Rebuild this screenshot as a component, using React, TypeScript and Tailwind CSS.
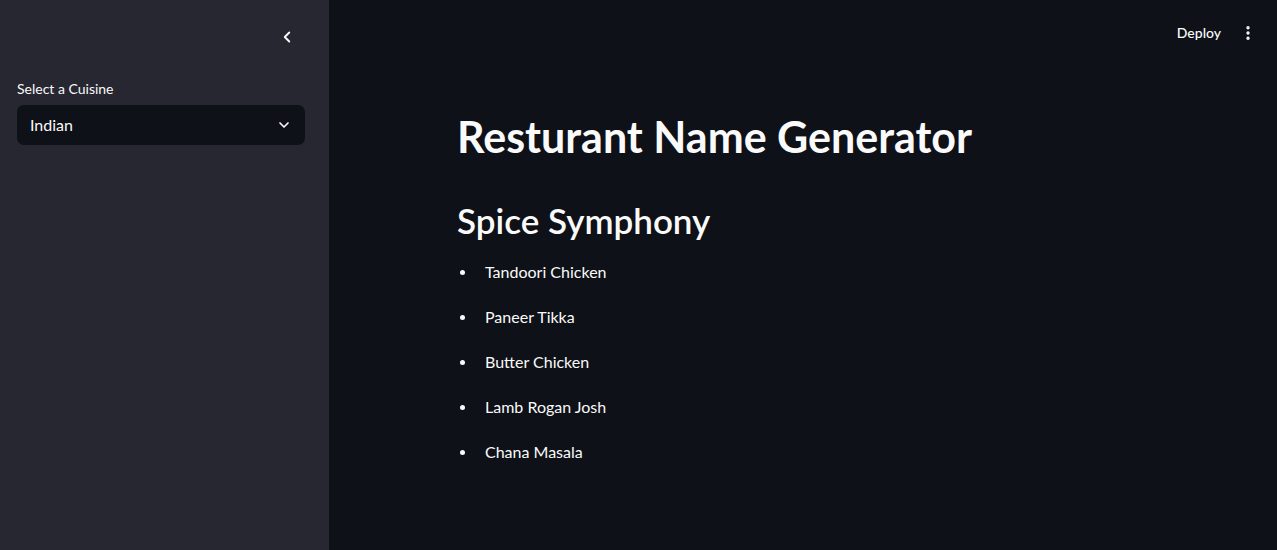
import { ChevronLeft, ChevronDown, EllipsisVertical } from 'lucide-react';

const dishes = ['Tandoori Chicken', 'Paneer Tikka', 'Butter Chicken', 'Lamb Rogan Josh', 'Chana Masala'];

function Sidebar() {
  return (
    <aside className="w-[329px] shrink-0 bg-[#262730] pl-[17px] pr-[24px]">
      <div className="flex h-[79px] items-start justify-end pr-[9px] pt-[28px]">
        <ChevronLeft className="h-[18px] w-[18px] text-[#fafafa]" strokeWidth={2.5} />
      </div>
      <label className="block text-[14px] leading-[20px] text-[#fafafa]">Select a Cuisine</label>
      <div className="mt-[6px] flex h-[40px] items-center justify-between rounded-[7px] bg-[#0e1117] pl-[13px] pr-[13px]">
        <span className="text-[16px] text-[#fafafa]">Indian</span>
        <ChevronDown className="h-[16px] w-[16px] text-[#fafafa]" strokeWidth={2.5} />
      </div>
    </aside>
  );
}

export default function App() {
  return (
    <div className="flex h-[550px] w-full overflow-hidden bg-[#0e1117] text-[#fafafa] font-['Lato',sans-serif]">
      <Sidebar />
      <main className="flex flex-1 flex-col">
        <header className="flex h-[66px] items-center justify-end gap-[18px] pr-[20px]">
          <span className="-mt-[2px] text-[14px] font-medium">Deploy</span>
          <EllipsisVertical className="h-[18px] w-[18px]" strokeWidth={2.5} />
        </header>
        <section className="mx-auto w-[736px] pl-[22px]">
          <h1 className="mt-[45px] text-[43px] font-bold leading-[1.2]">Resturant Name Generator</h1>
          <h2 className="mt-[36px] text-[35px] font-semibold leading-[1.2]">Spice Symphony</h2>
          <ul className="mt-[19px] flex flex-col gap-[21px] pl-[28px]">
            {dishes.map((d) => (
              <li key={d} className="relative text-[16px] leading-[24px]">
                <span className="absolute left-[-25px] top-[10px] h-[5px] w-[5px] rounded-full bg-[#fafafa]" />
                {d}
              </li>
            ))}
          </ul>
        </section>
      </main>
    </div>
  );
}
